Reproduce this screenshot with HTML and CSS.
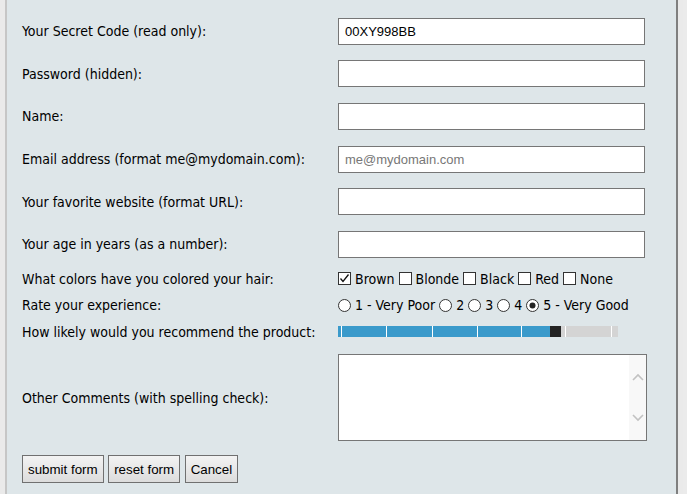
FILE: index.html
```html
<!DOCTYPE html>
<html>
<head>
<meta charset="utf-8">
<link rel="stylesheet" href="styles.css">
</head>
<body>
<div class="page">
  <div class="gutter"></div>
  <form class="panel">
    <div class="row row-input">
      <label class="lbl">Your Secret Code (read only):</label>
      <input class="field" type="text" value="00XY998BB" readonly>
    </div>
    <div class="row row-input">
      <label class="lbl">Password (hidden):</label>
      <input class="field" type="password">
    </div>
    <div class="row row-input">
      <label class="lbl">Name:</label>
      <input class="field" type="text">
    </div>
    <div class="row row-input">
      <label class="lbl">Email address (format me@mydomain.com):</label>
      <input class="field" type="email" placeholder="me@mydomain.com">
    </div>
    <div class="row row-input">
      <label class="lbl">Your favorite website (format URL):</label>
      <input class="field" type="url">
    </div>
    <div class="row row-input">
      <label class="lbl">Your age in years (as a number):</label>
      <input class="field" type="text">
    </div>
    <div class="row row-small">
      <label class="lbl">What colors have you colored your hair:</label>
      <div class="opts">
        <span class="opt"><svg class="box" width="13" height="13" viewBox="0 0 13 13"><rect x="0.5" y="0.5" width="12" height="12" fill="#fff" stroke="#333"/><path d="M2.5 6.5 L5 9.5 L10.5 2.5" fill="none" stroke="#111" stroke-width="1.3"/></svg>Brown</span>
        <span class="opt"><svg class="box" width="13" height="13" viewBox="0 0 13 13"><rect x="0.5" y="0.5" width="12" height="12" fill="#fff" stroke="#333"/></svg>Blonde</span>
        <span class="opt"><svg class="box" width="13" height="13" viewBox="0 0 13 13"><rect x="0.5" y="0.5" width="12" height="12" fill="#fff" stroke="#333"/></svg>Black</span>
        <span class="opt"><svg class="box" width="13" height="13" viewBox="0 0 13 13"><rect x="0.5" y="0.5" width="12" height="12" fill="#fff" stroke="#333"/></svg>Red</span>
        <span class="opt"><svg class="box" width="13" height="13" viewBox="0 0 13 13"><rect x="0.5" y="0.5" width="12" height="12" fill="#fff" stroke="#333"/></svg>None</span>
      </div>
    </div>
    <div class="row row-small">
      <label class="lbl">Rate your experience:</label>
      <div class="opts">
        <span class="opt"><svg class="box" width="13" height="13" viewBox="0 0 13 13"><circle cx="6.5" cy="6.5" r="6" fill="#fff" stroke="#333"/></svg>1 - Very Poor</span>
        <span class="opt"><svg class="box" width="13" height="13" viewBox="0 0 13 13"><circle cx="6.5" cy="6.5" r="6" fill="#fff" stroke="#333"/></svg>2</span>
        <span class="opt"><svg class="box" width="13" height="13" viewBox="0 0 13 13"><circle cx="6.5" cy="6.5" r="6" fill="#fff" stroke="#333"/></svg>3</span>
        <span class="opt"><svg class="box" width="13" height="13" viewBox="0 0 13 13"><circle cx="6.5" cy="6.5" r="6" fill="#fff" stroke="#333"/></svg>4</span>
        <span class="opt"><svg class="box" width="13" height="13" viewBox="0 0 13 13"><circle cx="6.5" cy="6.5" r="6" fill="#fff" stroke="#333"/><circle cx="6.5" cy="6.5" r="3" fill="#222"/></svg>5 - Very Good</span>
      </div>
    </div>
    <div class="row row-small">
      <label class="lbl">How likely would you recommend the product:</label>
      <div class="range">
        <div class="range-fill"></div>
        <div class="range-thumb"></div>
        <div class="range-rest"></div>
        <span class="tick" style="left:3px"></span>
        <span class="tick" style="left:48px"></span>
        <span class="tick" style="left:94px"></span>
        <span class="tick" style="left:139px"></span>
        <span class="tick" style="left:183px"></span>
        <span class="tick" style="left:227px"></span>
        <span class="tick" style="left:273px"></span>
      </div>
    </div>
    <div class="row row-area">
      <label class="lbl">Other Comments (with spelling check):</label>
      <div class="area">
        <textarea class="area-text" spellcheck="true"></textarea>
        <div class="scroll">
          <svg width="12" height="8" viewBox="0 0 12 8"><path d="M1 7 L6 2 L11 7" fill="none" stroke="#c2c2c2" stroke-width="1.6"/></svg>
          <svg width="12" height="8" viewBox="0 0 12 8"><path d="M1 1 L6 6 L11 1" fill="none" stroke="#c2c2c2" stroke-width="1.6"/></svg>
        </div>
      </div>
    </div>
    <div class="buttons">
      <button type="button" class="btn">submit form</button>
      <button type="button" class="btn">reset form</button>
      <button type="button" class="btn">Cancel</button>
    </div>
  </form>
  <div class="gutter gutter-right"></div>
</div>
</body>
</html>
```

FILE: styles.css
```css
html, body {
  margin: 0;
  padding: 0;
  background: #ebebeb;
}
.page {
  display: flex;
  width: 687px;
  height: 494px;
  overflow: hidden;
}
.gutter {
  width: 5px;
  flex: none;
  background: #eaeaea;
}
.panel {
  width: 673px;
  flex: none;
  box-sizing: border-box;
  border-left: 2px solid #c6c6c6;
  border-right: 2px solid #7f7f7f;
  background: #dee6e9;
  padding: 10px 0 0 15px;
  font-family: "DejaVu Sans Condensed", "DejaVu Sans", sans-serif;
  font-size: 14px;
  color: #000;
  display: flex;
  flex-direction: column;
}
.row {
  display: flex;
  align-items: center;
}
.lbl {
  width: 316px;
  flex: none;
}
.row-input {
  height: 42.6px;
}
.row-small {
  height: 26.5px;
}
.row-area {
  padding: 9px 0 8px;
}
.field {
  width: 307px;
  height: 27px;
  box-sizing: border-box;
  border: 1px solid #767676;
  background: #fff;
  margin: 0;
  padding: 0 6px;
  font-family: "Liberation Sans", Arial, sans-serif;
  font-size: 13px;
  color: #000;
  outline: none;
}
.field::placeholder {
  color: #777;
}
.opts {
  display: flex;
  align-items: center;
}
.opt {
  display: inline-flex;
  align-items: center;
  margin-right: 4px;
}
.box {
  margin-right: 4px;
  flex: none;
}
.range {
  position: relative;
  width: 280px;
  height: 11px;
  display: flex;
}
.range-fill {
  width: 212px;
  background: #3a9acb;
}
.range-thumb {
  width: 11px;
  background: #232323;
}
.range-rest {
  flex: 1;
  background: #d4d4d4;
}
.tick {
  position: absolute;
  top: 0;
  width: 1px;
  height: 11px;
  background: #fff;
}
.area {
  width: 309px;
  height: 87px;
  box-sizing: border-box;
  border: 1px solid #767676;
  background: #fff;
  display: flex;
}
.area-text {
  flex: 1;
  border: none;
  outline: none;
  resize: none;
  margin: 0;
  padding: 2px;
  font-family: "Liberation Sans", Arial, sans-serif;
  font-size: 13px;
  background: #fff;
}
.scroll {
  width: 17px;
  background: #f8f8f8;
  display: flex;
  flex-direction: column;
  align-items: center;
  justify-content: space-between;
  padding: 18px 0 18px;
  box-sizing: border-box;
}
.buttons {
  display: flex;
  gap: 4.5px;
  padding-top: 6px;
}
.btn {
  height: 28px;
  box-sizing: border-box;
  border: 1px solid #707070;
  background: linear-gradient(#f3f3f3, #dcdcdc);
  font-family: "Liberation Sans", Arial, sans-serif;
  font-size: 13.33px;
  color: #000;
  padding: 0 5px;
  margin: 0;
}
```
